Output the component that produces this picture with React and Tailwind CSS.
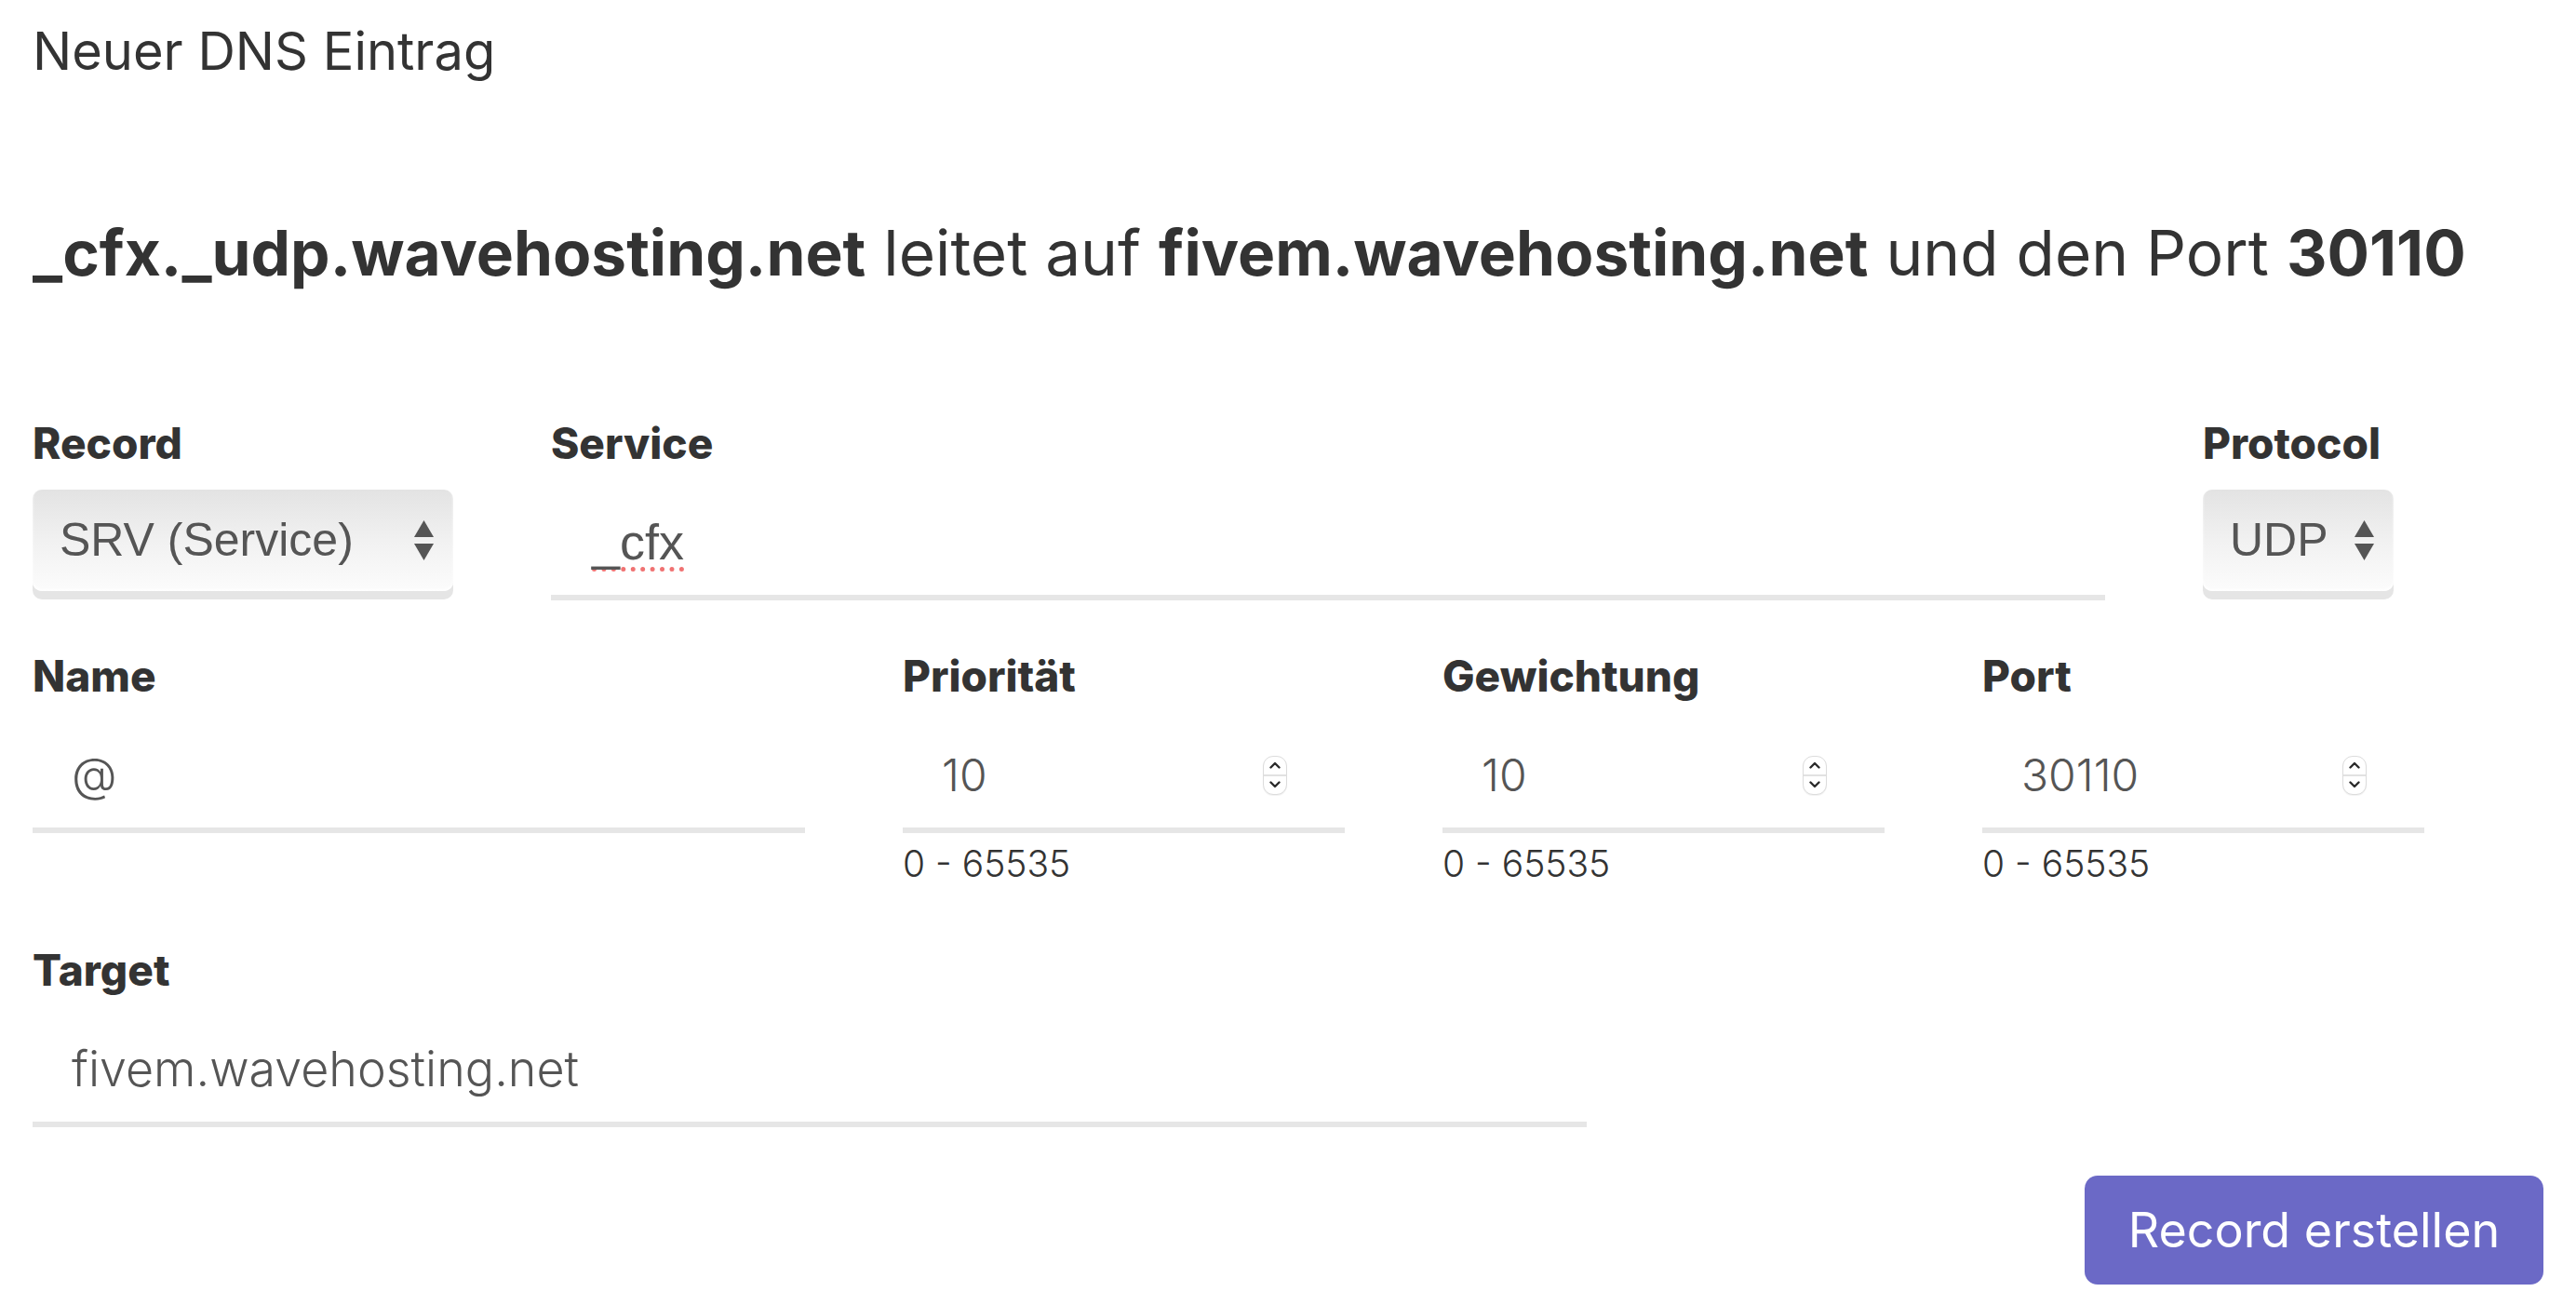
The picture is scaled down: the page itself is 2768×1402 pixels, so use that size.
import React from 'react'

function SelectArrows() {
  return (
    <svg width="21" height="43" viewBox="0 0 21 43" className="shrink-0">
      <polygon points="10.5,0 21,18 0,18" fill="#555555" />
      <polygon points="0,25 21,25 10.5,43" fill="#555555" />
    </svg>
  )
}

function Spinner() {
  return (
    <div className="flex flex-col w-[26px] h-[42px] rounded-[11px] border border-[#dcdcdc] bg-white overflow-hidden shadow-[0_1px_1px_rgba(0,0,0,0.06)]">
      <div className="flex-1 flex items-center justify-center border-b-2 border-[#e2e2e2]">
        <svg width="12" height="8" viewBox="0 0 12 8">
          <path d="M1.5 6.5 L6 2 L10.5 6.5" stroke="#2b2b2b" strokeWidth="2.4" fill="none" strokeLinecap="round" strokeLinejoin="round" />
        </svg>
      </div>
      <div className="flex-1 flex items-center justify-center">
        <svg width="12" height="8" viewBox="0 0 12 8">
          <path d="M1.5 1.5 L6 6 L10.5 1.5" stroke="#2b2b2b" strokeWidth="2.4" fill="none" strokeLinecap="round" strokeLinejoin="round" />
        </svg>
      </div>
    </div>
  )
}

function Label({ children }) {
  return (
    <div className="font-['Inter',sans-serif] font-extrabold text-[46px] leading-[56px] text-[#333333]">
      {children}
    </div>
  )
}

function Select({ value, width }) {
  return (
    <div className={`${width} mt-[22px]`}>
      <div className="h-[109px] flex items-center justify-between pl-[29px] pr-[21px] rounded-[10px] bg-gradient-to-b from-[#e3e3e3] via-[#f1f1f1] to-[#fcfcfc] shadow-[0_9px_0_#e5e5e5,inset_0_-2px_3px_rgba(255,255,255,0.9)]">
        <span className="font-['Liberation_Sans',sans-serif] text-[50px] text-[#555555]">{value}</span>
        <SelectArrows />
      </div>
    </div>
  )
}

function TextField({ children, number }) {
  return (
    <div className="mt-[22px] h-[119px] flex items-center justify-between pl-[42px] pr-[62px] border-b-[6px] border-[#e6e6e6]">
      {children}
      {number && <Spinner />}
    </div>
  )
}

function NumberField({ label, value }) {
  return (
    <div className="w-[475px] flex flex-col">
      <Label>{label}</Label>
      <TextField number>
        <span className="font-['Inter',sans-serif] font-light text-[48px] text-[#555555]">{value}</span>
      </TextField>
      <div className="mt-[10px] font-['Inter',sans-serif] font-light text-[39px] leading-[46px] text-[#333333]">
        0 - 65535
      </div>
    </div>
  )
}

export default function App() {
  return (
    <div className="min-h-screen w-[2768px] bg-white px-[35px] pt-[15px] text-[#333333]">
      <h1 className="font-['Inter',sans-serif] font-normal text-[56px] leading-[80px] text-[#333333]">
        Neuer DNS Eintrag
      </h1>

      <h3 className="mt-[137px] font-['Inter',sans-serif] text-[67.5px] leading-[80px] text-[#333333]">
        <b className="font-bold">_cfx._udp.wavehosting.net</b> leitet auf{' '}
        <b className="font-bold">fivem.wavehosting.net</b> und den Port <b className="font-bold">30110</b>
      </h3>

      {/* Record / Service / Protocol */}
      <div className="mt-[136px] flex gap-[105px]">
        <div className="flex flex-col">
          <Label>Record</Label>
          <Select value="SRV (Service)" width="w-[452px]" />
        </div>
        <div className="w-[1670px] flex flex-col">
          <Label>Service</Label>
          <div className="mt-[22px] h-[119px] flex items-center pl-[44px] border-b-[6px] border-[#e6e6e6]">
            <span className="font-['Liberation_Sans',sans-serif] text-[54px] text-[#555555] underline decoration-dotted decoration-[#f07272] decoration-[5px] underline-offset-[8px]">
              _cfx
            </span>
          </div>
        </div>
        <div className="flex flex-col">
          <Label>Protocol</Label>
          <Select value="UDP" width="w-[205px]" />
        </div>
      </div>

      {/* Name / Priorität / Gewichtung / Port */}
      <div className="mt-[53px] flex items-start gap-[105px]">
        <div className="w-[830px] flex flex-col">
          <Label>Name</Label>
          <TextField>
            <span className="font-['Inter',sans-serif] font-light text-[50px] text-[#555555]">@</span>
          </TextField>
        </div>
        <NumberField label="Priorität" value="10" />
        <NumberField label="Gewichtung" value="10" />
        <NumberField label="Port" value="30110" />
      </div>

      {/* Target */}
      <div className="mt-[63px] w-[1670px] flex flex-col">
        <Label>Target</Label>
        <TextField>
          <span className="font-['Inter',sans-serif] font-light text-[52px] text-[#555555]">fivem.wavehosting.net</span>
        </TextField>
      </div>

      <div className="mt-[52px] flex justify-end">
        <button className="w-[493px] h-[117px] rounded-[14px] bg-[#6b69c6] text-white font-['Inter',sans-serif] text-[52px]">
          Record erstellen
        </button>
      </div>
    </div>
  )
}
